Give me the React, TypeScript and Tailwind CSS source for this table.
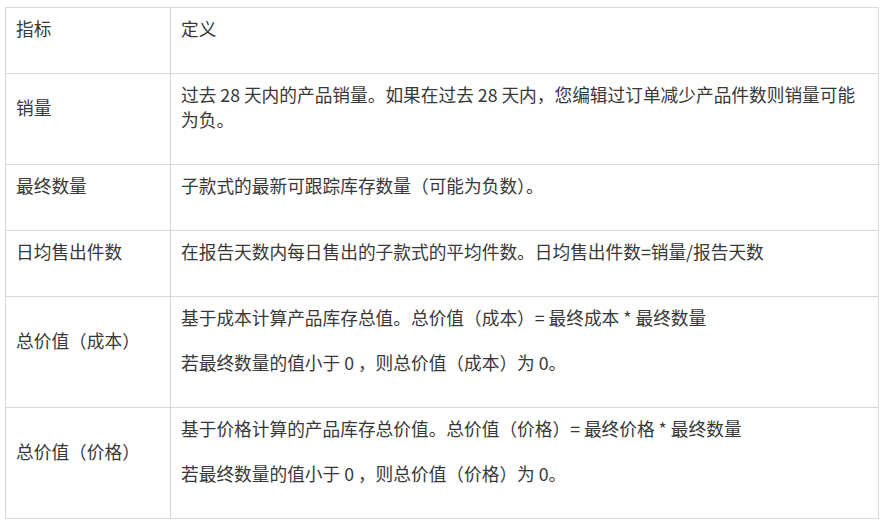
import React from "react";

type Row = { name: string; paras: string[] };

const rows: Row[] = [
  { name: "指标", paras: ["定义"] },
  {
    name: "销量",
    paras: [
      "过去 28 天内的产品销量。如果在过去 28 天内，您编辑过订单减少产品件数则销量可能为负。",
    ],
  },
  { name: "最终数量", paras: ["子款式的最新可跟踪库存数量（可能为负数）。"] },
  {
    name: "日均售出件数",
    paras: ["在报告天数内每日售出的子款式的平均件数。日均售出件数=销量/报告天数"],
  },
  {
    name: "总价值（成本）",
    paras: [
      "基于成本计算产品库存总值。总价值（成本）= 最终成本 * 最终数量",
      "若最终数量的值小于 0 ，则总价值（成本）为 0。",
    ],
  },
  {
    name: "总价值（价格）",
    paras: [
      "基于价格计算的产品库存总价值。总价值（价格）= 最终价格 * 最终数量",
      "若最终数量的值小于 0 ，则总价值（价格）为 0。",
    ],
  },
];

export default function App() {
  return (
    <div
      className="w-[886px] h-[522px] bg-white pl-[5px] pt-[7px] text-[#383838]"
      style={{ fontFamily: '"Noto Sans CJK SC", "Noto Sans", sans-serif' }}
    >
      <table className="w-[873px] table-fixed border-collapse text-[17.7px] leading-[25px]">
        <colgroup>
          <col className="w-[165px]" />
          <col className="w-[708px]" />
        </colgroup>
        <tbody>
          {rows.map((r, i) => (
            <tr key={i}>
              <td className="border border-[#d9d9d9] align-middle pl-[10px] pr-[10px] pt-[8px] pb-[12px]">
                <p className="mb-[20px]">{r.name}</p>
              </td>
              <td className="border border-[#d9d9d9] align-middle pl-[10px] pr-[10px] pt-[8px] pb-[12px]">
                {r.paras.map((p, j) => (
                  <p key={j} className="mb-[20px]">
                    {p}
                  </p>
                ))}
              </td>
            </tr>
          ))}
        </tbody>
      </table>
    </div>
  );
}
